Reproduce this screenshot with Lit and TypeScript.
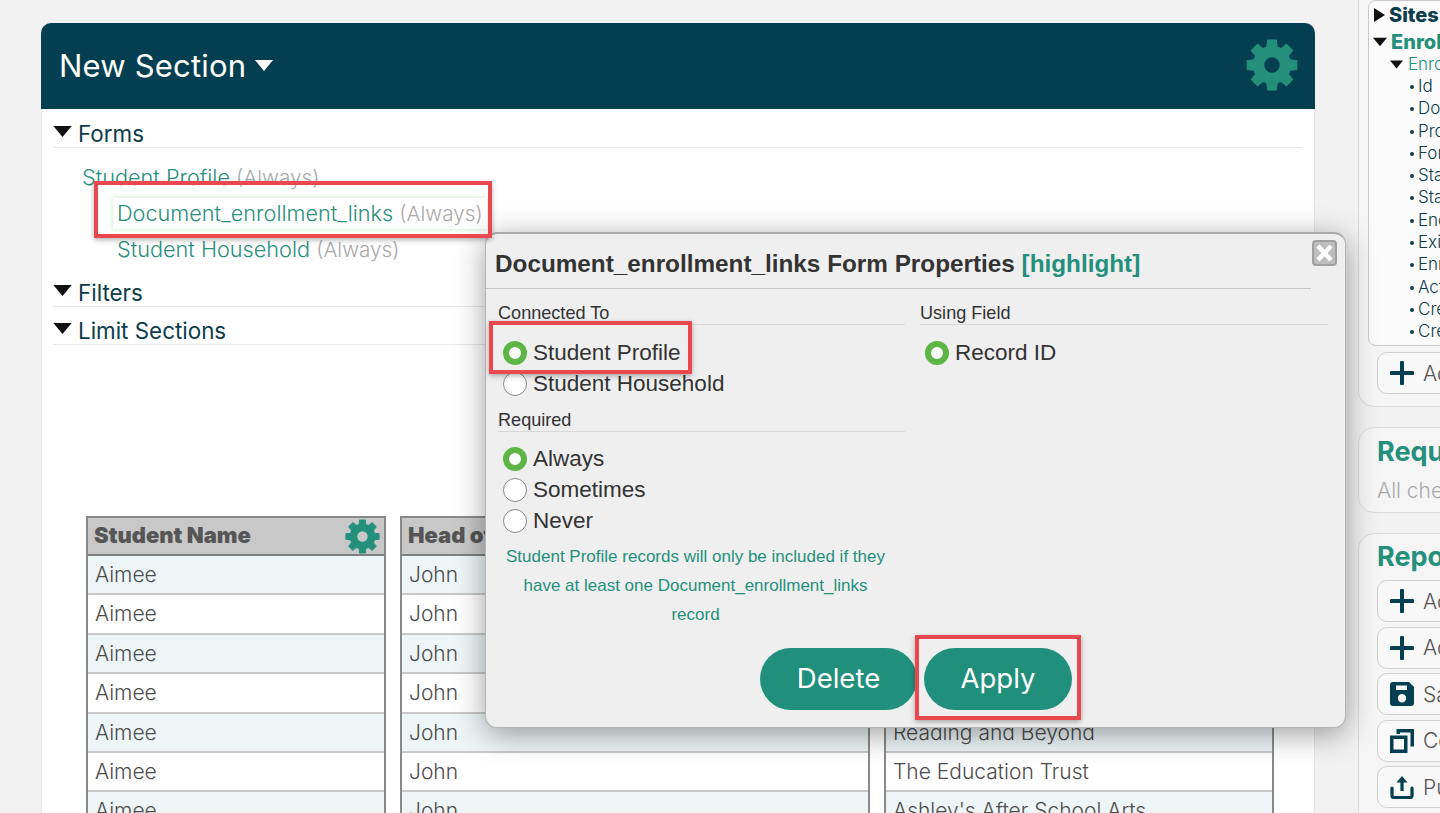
import { LitElement, html, css, svg } from 'lit';
import { customElement } from 'lit/decorators.js';

// 8 tooth gear, drawn in a 52 box
const gearPath = (() => {
  const cx = 26;
  const cy = 26;
  const pts: string[] = [];
  for (let i = 0; i < 8; i++) {
    const a = (i * Math.PI) / 4 - Math.PI / 2;
    const p = (r: number, off: number) => {
      const x = cx + r * Math.cos(a + off);
      const y = cy + r * Math.sin(a + off);
      return `${x.toFixed(2)} ${y.toFixed(2)}`;
    };
    pts.push(p(18.5, -0.27), p(25, -0.17), p(25, 0.17), p(18.5, 0.27));
  }
  const ring = 'M26 17.5a8.5 8.5 0 1 0 0 17a8.5 8.5 0 1 0 0-17Z';
  return `M${pts.join('L')}Z ${ring}`;
})();

const gear = (size: number) => html`<svg width=${size} height=${size} viewBox="0 0 52 52">
  <path d=${gearPath} fill="#24907c" fill-rule="evenodd" stroke="#24907c" stroke-width="1.5" stroke-linejoin="round"></path>
</svg>`;

const tri = (w: number, h: number, color = '#111') => html`<svg width=${w} height=${h} viewBox="0 0 20 12">
  <path d="M0 0H20L10 12Z" fill=${color}></path>
</svg>`;

const icons = {
  plus: svg`<path d="M12 1.5V22.5M1.5 12H22.5" stroke="#033f50" stroke-width="4" stroke-linecap="round" fill="none"></path>`,
  save: svg`<path fill-rule="evenodd" d="M3 0H19L24 5V21A3 3 0 0 1 21 24H3A3 3 0 0 1 0 21V3A3 3 0 0 1 3 0ZM6 3.5V8H17V3.5ZM12 12A4.2 4.2 0 1 0 12 20.4A4.2 4.2 0 1 0 12 12Z" fill="#033f50"></path>`,
  copy: svg`<path fill-rule="evenodd" d="M0 6.5H17.5V24H0ZM3.5 10V20.5H14V10Z M6.5 0H24V17.5H20.5V3.5H10V5H6.5Z" fill="#033f50"></path>`,
  publish: svg`<path d="M2 13V20.5A2 2 0 0 0 4 22.5H20A2 2 0 0 0 22 20.5V13" stroke="#033f50" stroke-width="3.2" fill="none" stroke-linecap="round"></path><path d="M12 3V16" stroke="#033f50" stroke-width="3.2"></path><path d="M6.5 7.5L12 1L17.5 7.5Z" fill="#033f50"></path>`,
};

const rowCount = 7;
const thirdCol: Record<number, string> = {
  4: 'Reading and Beyond',
  5: 'The Education Trust',
  6: "Ashley's After School Arts",
};

const columns = [
  { cls: 'c1', head: 'Student Name', cell: () => 'Aimee', gear: true },
  { cls: 'c2', head: 'Head of Household', cell: () => 'John', gear: false },
  { cls: 'c3', head: '', cell: (i: number) => thirdCol[i] ?? '', gear: false },
];

const treeFields = ['Id', 'Document', 'Program', 'Form', 'Start Date', 'Status', 'End Date', 'Exit Reason', 'Enrolled', 'Active', 'Created', 'Created By'];

const reportActions = [
  { icon: icons.plus, label: 'Add Section' },
  { icon: icons.plus, label: 'Add Filter' },
  { icon: icons.save, label: 'Save' },
  { icon: icons.copy, label: 'Copy' },
  { icon: icons.publish, label: 'Publish' },
];

@customElement('app-root')
export class AppRoot extends LitElement {
  static styles = css`
    :host {
      display: block;
      position: relative;
      height: 813px;
      overflow: hidden;
      background: #f2f2f2;
      font-family: Inter, 'Liberation Sans', sans-serif;
    }
    .page {
      display: flex;
      align-items: flex-start;
      width: 1800px;
    }
    .card {
      box-sizing: border-box;
      width: 1274px;
      height: 900px;
      margin: 23px 0 0 41px;
      background: #fff;
      border: 1px solid #e6e6e6;
      border-top: 0;
      border-radius: 10px 10px 0 0;
    }
    .card-head {
      display: flex;
      align-items: center;
      justify-content: space-between;
      box-sizing: border-box;
      height: 86px;
      margin: 0 -1px;
      padding: 0 17px 2px 18px;
      background: #033f50;
      border-radius: 10px 10px 0 0;
      color: #fff;
    }
    .card-title {
      display: flex;
      align-items: center;
      gap: 9px;
      font-size: 31px;
      letter-spacing: 0.2px;
    }
    .card-body {
      padding: 12px 12px 0 11px;
    }
    .sec-head {
      display: flex;
      align-items: center;
      gap: 6px;
      box-sizing: border-box;
      height: 27px;
      padding-bottom: 2px;
      border-bottom: 1px solid #e8e8e8;
      font-size: 22.4px;
      color: #0d3c4c;
    }
    .sec-head svg {
      margin-top: -4px;
    }
    .sec-head + .sec-head {
      margin-top: 11px;
    }
    .form-tree {
      padding: 11px 0 13px;
      font-size: 21.7px;
      color: #2a8f7c;
      font-weight: 300;
    }
    .form-row {
      height: 36px;
      line-height: 36px;
      white-space: nowrap;
      padding-left: 64px;
    }
    .form-row.top {
      padding-left: 29px;
    }
    .form-row span {
      color: #aaa;
      font-size: 20.7px;
    }
    .form-row.picked b {
      font-weight: 300;
      display: inline-block;
      margin-left: -4px;
      padding: 0 4px;
      background: #fff;
      line-height: 31px;
      box-shadow: 0 0 5px rgba(90, 190, 90, 0.35);
    }
    .grid {
      display: flex;
      gap: 14px;
      margin: 171px 0 0 33px;
    }
    .col {
      flex: none;
      box-sizing: border-box;
      border: solid #8a8a8a;
      border-width: 2px 2px 0;
    }
    .c1 { width: 300px; }
    .c2 { width: 470px; }
    .c3 { width: 390px; }
    .col-head {
      display: flex;
      align-items: center;
      justify-content: space-between;
      box-sizing: border-box;
      height: 38px;
      padding: 0 4px 2px 6px;
      background: #c8c8c8;
      border-bottom: 2px solid #808080;
      font-size: 22px;
      font-weight: 900;
      color: #555;
      white-space: nowrap;
    }
    .col-head svg {
      margin-top: 2px;
    }
    .cell {
      box-sizing: border-box;
      height: 39.4px;
      line-height: 38.5px;
      padding-left: 7px;
      border-bottom: 2px solid #c8c8c8;
      font-size: 21px;
      font-weight: 300;
      color: #4c4c4c;
      white-space: nowrap;
    }
    .cell.alt {
      background: #edf5f6;
    }
    .side {
      flex: none;
      width: 340px;
      margin-left: 43px;
    }
    .panel {
      box-sizing: border-box;
      margin-bottom: 20px;
      padding: 0 18px 12px;
      background: #f5f5f5;
      border: 1px solid #dcdcd8;
      border-radius: 16px;
    }
    .panel.first {
      height: 407px;
      padding: 0 18px 0 9px;
      border-top: 0;
      border-radius: 0 0 16px 16px;
    }
    .tree {
      box-sizing: border-box;
      height: 346px;
      padding-left: 5px;
      background: #fbfbfb;
      border: 1px solid #c9c9c5;
      border-radius: 8px;
      color: #0d3c4c;
      white-space: nowrap;
    }
    .t1 {
      display: flex;
      align-items: center;
      gap: 4px;
      height: 27px;
      font-size: 20px;
      font-weight: 800;
    }
    .t1.on {
      color: #24907c;
      margin-left: -1px;
    }
    .t2 {
      display: flex;
      align-items: center;
      gap: 5px;
      height: 22px;
      margin-top: -2px;
      padding-left: 16px;
      font-size: 17px;
      font-weight: 300;
      color: #24907c;
    }
    .t3 {
      height: 22.3px;
      line-height: 22.3px;
      padding-left: 37px;
      font-size: 17px;
      font-weight: 300;
    }
    .t3::before {
      content: '';
      display: inline-block;
      width: 4px;
      height: 4px;
      margin: 0 4px 3px -1px;
      border-radius: 50%;
      background: #0d3c4c;
    }
    .action {
      display: flex;
      align-items: center;
      gap: 9px;
      box-sizing: border-box;
      height: 42px;
      margin-bottom: 4.5px;
      padding-left: 12px;
      background: #f8f8f8;
      border: 1px solid #cfcfcb;
      border-radius: 10px;
      font-size: 21px;
      font-weight: 300;
      color: #555;
      white-space: nowrap;
    }
    .panel.first .action {
      margin: 6px 0 0 9px;
    }
    .panel h3 {
      margin: 0;
      color: #24907c;
      font-size: 27px;
      font-weight: 700;
      line-height: 46px;
      white-space: nowrap;
    }
    .panel.req {
      height: 86px;
      padding-top: 1px;
    }
    .panel.req p {
      margin: 0;
      font-size: 21px;
      font-weight: 300;
      color: #aaa;
      line-height: 32px;
      white-space: nowrap;
    }
    .modal {
      position: absolute;
      left: 485px;
      top: 232px;
      box-sizing: border-box;
      width: 861px;
      height: 496px;
      background: #efefef;
      border: 1px solid #b5b5b5;
      border-top: 2px solid #aaa;
      border-radius: 12px;
      box-shadow: 0 6px 30px rgba(0, 0, 0, 0.38);
      font-family: 'Liberation Sans', Arial, sans-serif;
      color: #333;
    }
    .modal-title {
      box-sizing: border-box;
      height: 55px;
      margin-right: 34px;
      padding: 16px 0 0 9px;
      border-bottom: 1px solid #c4c4c4;
      font-size: 24.3px;
      font-weight: 700;
      white-space: nowrap;
    }
    .modal-title span {
      color: #24907c;
    }
    .close {
      position: absolute;
      right: 8px;
      top: 6px;
      box-sizing: border-box;
      width: 25px;
      height: 26px;
      border: 2px solid #a0a0a0;
      border-radius: 4px;
      background: #bdbdbd;
    }
    .close svg {
      display: block;
    }
    .modal-cols {
      display: grid;
      grid-template-columns: 407px 408px;
      gap: 15px;
      padding: 12px 0 0 12px;
    }
    .label {
      box-sizing: border-box;
      height: 24px;
      line-height: 24px;
      border-bottom: 1px solid #d8d8d8;
      font-size: 18.1px;
    }
    .radios {
      margin: 12px 0 9px;
    }
    .radios.req {
      margin: 11px 0 0;
    }
    .radio {
      display: flex;
      align-items: center;
      gap: 6px;
      height: 31px;
      padding-left: 5px;
      font-size: 22.5px;
      white-space: nowrap;
    }
    .dot {
      flex: none;
      box-sizing: border-box;
      width: 24px;
      height: 24px;
      border-radius: 50%;
      background: #fff;
      border: 1.5px solid #888;
    }
    .dot.on {
      border: 6px solid #5cb545;
    }
    .hint {
      margin: 6px 12px 0 0;
      font-size: 17px;
      line-height: 29px;
      text-align: center;
      color: #1f917b;
    }
    .buttons {
      display: flex;
      gap: 7px;
      margin: 19px 0 0 274px;
    }
    .btn {
      box-sizing: border-box;
      height: 62px;
      line-height: 60px;
      text-align: center;
      border-radius: 31px;
      background: #20907c;
      color: #fff;
      font-family: Inter, 'Liberation Sans', sans-serif;
      font-size: 27.5px;
      font-weight: 400;
    }
    .btn.del { width: 157px; }
    .btn.app { width: 148px; }
    .mark {
      position: absolute;
      box-sizing: border-box;
      border: 4px solid #e9484f;
      box-shadow: 0 2px 5px rgba(0, 0, 0, 0.3);
      pointer-events: none;
    }
    .m1 { left: 94px; top: 181px; width: 398px; height: 57px; }
    .m2 { left: 489px; top: 321px; width: 203px; height: 53px; }
    .m3 { left: 915px; top: 635px; width: 166px; height: 85px; }
  `;

  private radio(label: string, on = false) {
    return html`<div class="radio"><span class="dot ${on ? 'on' : ''}"></span>${label}</div>`;
  }

  render() {
    return html`
      <div class="page">
        <section class="card">
          <header class="card-head">
            <div class="card-title">New Section ${tri(18, 11, '#fff')}</div>
            ${gear(52)}
          </header>
          <div class="card-body">
            <div class="sec-head">${tri(19, 11)} Forms</div>
            <div class="form-tree">
              <div class="form-row top">Student Profile <span>(Always)</span></div>
              <div class="form-row picked"><b>Document_enrollment_links <span>(Always)</span></b></div>
              <div class="form-row">Student Household <span>(Always)</span></div>
            </div>
            <div class="sec-head">${tri(19, 11)} Filters</div>
            <div class="sec-head">${tri(19, 11)} Limit Sections</div>
            <div class="grid">
              ${columns.map(
                (c) => html`<div class="col ${c.cls}">
                  <div class="col-head"><span>${c.head}</span>${c.gear ? gear(35) : ''}</div>
                  ${Array.from({ length: rowCount }, (_, i) => html`<div class="cell ${i % 2 === 0 ? 'alt' : ''}">${c.cell(i)}</div>`)}
                </div>`,
              )}
            </div>
          </div>
        </section>

        <aside class="side">
          <div class="panel first">
            <div class="tree">
              <div class="t1"><svg width="11" height="14" viewBox="0 0 11 14"><path d="M0 0V14L11 7Z" fill="#111"></path></svg> Sites</div>
              <div class="t1 on">${tri(14, 10)} Enrollments</div>
              <div class="t2">${tri(13, 9)} Enrollment</div>
              ${treeFields.map((f) => html`<div class="t3">${f}</div>`)}
            </div>
            <div class="action"><svg width="24" height="24" viewBox="0 0 24 24">${icons.plus}</svg> Add Field</div>
          </div>
          <div class="panel req">
            <h3>Required</h3>
            <p>All checks passed</p>
          </div>
          <div class="panel">
            <h3>Report Actions</h3>
            ${reportActions.map((a) => html`<div class="action"><svg width="24" height="24" viewBox="0 0 24 24">${a.icon}</svg> ${a.label}</div>`)}
          </div>
        </aside>
      </div>

      <div class="modal">
        <div class="modal-title">Document_enrollment_links Form Properties <span>[highlight]</span></div>
        <div class="close">
          <svg width="21" height="22" viewBox="0 0 21 22"><path d="M4 4L17 18M17 4L4 18" stroke="#fff" stroke-width="4.5"></path></svg>
        </div>
        <div class="modal-cols">
          <div>
            <div class="label">Connected To</div>
            <div class="radios">
              ${this.radio('Student Profile', true)}
              ${this.radio('Student Household')}
            </div>
            <div class="label">Required</div>
            <div class="radios req">
              ${this.radio('Always', true)}
              ${this.radio('Sometimes')}
              ${this.radio('Never')}
            </div>
            <div class="hint">
              Student Profile records will only be included if they<br />
              have at least one Document_enrollment_links<br />
              record
            </div>
          </div>
          <div>
            <div class="label">Using Field</div>
            <div class="radios">${this.radio('Record ID', true)}</div>
          </div>
        </div>
        <div class="buttons">
          <div class="btn del">Delete</div>
          <div class="btn app">Apply</div>
        </div>
      </div>

      <div class="mark m1"></div>
      <div class="mark m2"></div>
      <div class="mark m3"></div>
    `;
  }
}
